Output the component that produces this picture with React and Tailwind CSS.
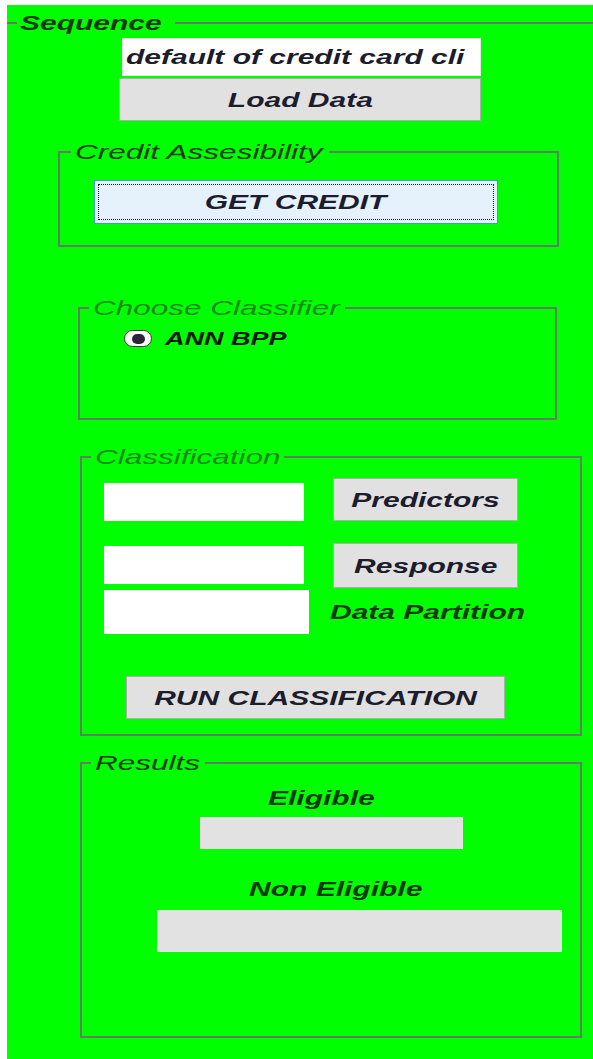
import React from "react";

// Wide lettering: the form's labels are drawn horizontally stretched.
function Wide({ children, className = "" }) {
  return <span className={"inline-block whitespace-nowrap scale-x-150 " + className}>{children}</span>;
}

function Button({ label, className = "" }) {
  return (
    <div
      className={
        "flex items-center justify-center bg-[#e1e1e1] border border-[#adadad] text-[20px] leading-[24px] font-bold text-[#1c1c2c] " +
        className
      }
    >
      <Wide className="origin-center">{label}</Wide>
    </div>
  );
}

export default function App() {
  return (
    <div className="w-[593px] h-[1059px] bg-white pt-[5px] pl-[7px] italic font-['Liberation_Sans',Arial,sans-serif] overflow-hidden">
      <div className="h-full bg-[#00ff00] pt-[6px]">
        {/* Sequence group */}
        <fieldset className="border-t-2 border-[#5f7f5f]">
          <legend className="ml-[10px] w-[158px] px-[3px] text-[20px] leading-[24px] font-bold text-[#0d3b0d]">
            <Wide className="origin-left">Sequence</Wide>
          </legend>

          <div className="ml-[115px] mt-[3px] w-[359px] h-[38px] bg-white border border-[#e6e6e6] overflow-hidden flex items-center pl-[3px]">
            <Wide className="origin-left text-[20px] leading-[24px] font-bold text-[#1c1c2c]">
              default of credit card cli
            </Wide>
          </div>

          <Button label="Load Data" className="ml-[112px] mt-[2px] w-[362px] h-[43px]" />

          {/* Credit Assesibility */}
          <fieldset className="ml-[51px] mt-[19px] w-[501px] border-2 border-[#5f7f5f] pb-[21px]">
            <legend className="ml-[11px] w-[258px] px-[4px] text-[21px] leading-[24px] text-[#0d3b0d]">
              <Wide className="origin-left">Credit Assesibility</Wide>
            </legend>
            <div className="ml-[34px] mt-[16px] w-[404px] h-[44px] bg-[#e5f1fb] border border-[#3c9ad8] p-[3px] flex">
              <div className="flex-1 border border-dotted border-[#1a1a1a] flex items-center justify-center text-[20px] leading-[24px] font-bold text-[#1c1c2c]">
                <Wide className="origin-center">GET CREDIT</Wide>
              </div>
            </div>
          </fieldset>

          {/* Choose Classifier */}
          <fieldset className="ml-[71px] mt-[49px] w-[479px] border-2 border-[#5f7f5f] pb-[71px]">
            <legend className="ml-[9px] w-[256px] px-[4px] text-[21px] leading-[24px] text-[#168a16]">
              <Wide className="origin-left">Choose Classifier</Wide>
            </legend>
            <div className="ml-[44px] mt-[10px] flex items-center h-[17px]">
              <div className="w-[28px] h-[17px] rounded-full border border-[#3a3a3a] bg-white flex items-center justify-center">
                <div className="w-[13px] h-[10px] rounded-full bg-[#2c2438]" />
              </div>
              <div className="ml-[13px] text-[18px] leading-[20px] font-bold text-[#001a00]">
                <Wide className="origin-left">ANN BPP</Wide>
              </div>
            </div>
          </fieldset>

          {/* Classification */}
          <fieldset className="ml-[73px] mt-[25px] w-[502px] border-2 border-[#5f7f5f] pb-[15px]">
            <legend className="ml-[9px] w-[193px] px-[4px] text-[21px] leading-[24px] text-[#168a16]">
              <Wide className="origin-left">Classification</Wide>
            </legend>

            <div className="ml-[22px] mt-[9px] flex items-start">
              <div className="mt-[5px] w-[200px] h-[38px] bg-white" />
              <Button label="Predictors" className="ml-[29px] w-[185px] h-[43px]" />
            </div>

            <div className="ml-[22px] mt-[22px] flex items-start">
              <div className="mt-[3px] w-[200px] h-[38px] bg-white" />
              <Button label="Response" className="ml-[29px] w-[185px] h-[45px]" />
            </div>

            <div className="ml-[22px] mt-[2px] flex items-center">
              <div className="w-[205px] h-[44px] bg-white" />
              <div className="ml-[21px] text-[20px] leading-[24px] font-bold text-[#0a3a0a]">
                <Wide className="origin-left">Data Partition</Wide>
              </div>
            </div>

            <Button label="RUN CLASSIFICATION" className="ml-[44px] mt-[42px] w-[379px] h-[43px]" />
          </fieldset>

          {/* Results */}
          <fieldset className="ml-[73px] mt-[15px] w-[502px] border-2 border-[#5f7f5f] pb-[84px]">
            <legend className="ml-[9px] w-[114px] px-[4px] text-[21px] leading-[24px] text-[#0d3b0d]">
              <Wide className="origin-left">Results</Wide>
            </legend>

            <div className="ml-[186px] mt-[11px] text-[20px] leading-[24px] font-bold text-[#0a3a0a]">
              <Wide className="origin-left">Eligible</Wide>
            </div>
            <div className="ml-[118px] mt-[7px] w-[263px] h-[32px] bg-[#e2e2e2]" />

            <div className="ml-[167px] mt-[28px] text-[20px] leading-[24px] font-bold text-[#0a3a0a]">
              <Wide className="origin-left">Non Eligible</Wide>
            </div>
            <div className="ml-[75px] mt-[9px] w-[405px] h-[42px] bg-[#e2e2e2]" />
          </fieldset>
        </fieldset>
      </div>
    </div>
  );
}
